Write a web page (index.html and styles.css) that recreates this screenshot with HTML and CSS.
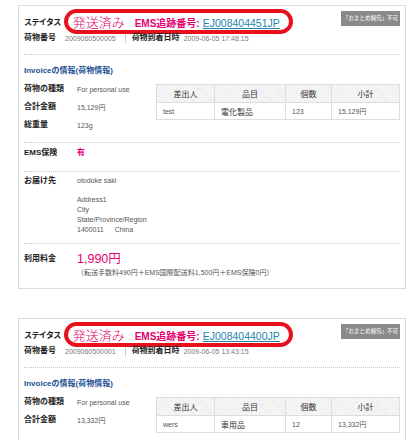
FILE: index.html
```html
<!DOCTYPE html>
<html lang="ja">
<head>
  <meta charset="UTF-8">
  <meta name="viewport" content="width=device-width, initial-scale=1.0">
  <title>荷物一覧</title>
  <link rel="stylesheet" href="styles.css">
</head>
<body>

  <!-- 荷物 1 -->
  <div class="parcel">
    <div class="parcel-head">
      <div class="status-row">
        <span class="label label-status">ステイタス</span>
        <span class="status-mark">
          <span class="status-text">発送済み</span>
          <span class="tracking-label">EMS追跡番号:</span>
          <a href="#" class="tracking-no">EJ008404451JP</a>
        </span>
        <span class="badge">「おまとめ梱包」不可</span>
      </div>
      <div class="meta-row">
        <span class="label">荷物番号</span>
        <span class="meta-value">2009060500005</span>
        <span class="meta-sep"></span>
        <span class="label">荷物到着日時</span>
        <span class="meta-value meta-date">2009-06-05 17:48:15</span>
      </div>
    </div>

    <div class="section invoice">
      <h3 class="section-title">Invoiceの情報(荷物情報)</h3>
      <div class="invoice-body">
        <dl class="fields">
          <div class="field"><dt class="label">荷物の種類</dt><dd>For personal use</dd></div>
          <div class="field"><dt class="label">合計金額</dt><dd>15,129円</dd></div>
          <div class="field"><dt class="label">総重量</dt><dd>123g</dd></div>
        </dl>
        <table class="items">
          <thead>
            <tr><th class="c-from">差出人</th><th class="c-item">品目</th><th class="c-qty">個数</th><th class="c-sub">小計</th></tr>
          </thead>
          <tbody>
            <tr><td>test</td><td class="jp">電化製品</td><td>123</td><td>15,129円</td></tr>
          </tbody>
        </table>
      </div>
    </div>

    <div class="section insurance">
      <div class="field"><span class="label">EMS保険</span><span class="yes">有</span></div>
    </div>

    <div class="section address">
      <div class="field">
        <span class="label">お届け先</span>
        <div class="address-body">
          <div>otodoke saki</div>
          <div class="address-lines">
            <div>Address1</div>
            <div>City</div>
            <div>State/Province/Region</div>
            <div>1400011<span class="country">China</span></div>
          </div>
        </div>
      </div>
    </div>

    <div class="section fee">
      <div class="field">
        <span class="label">利用料金</span>
        <div>
          <div class="fee-total">1,990円</div>
          <div class="fee-note">（転送手数料490円＋EMS国際配送料1,500円＋EMS保険0円）</div>
        </div>
      </div>
    </div>
  </div>

  <!-- 荷物 2 -->
  <div class="parcel">
    <div class="parcel-head">
      <div class="status-row">
        <span class="label label-status">ステイタス</span>
        <span class="status-mark">
          <span class="status-text">発送済み</span>
          <span class="tracking-label">EMS追跡番号:</span>
          <a href="#" class="tracking-no">EJ008404400JP</a>
        </span>
        <span class="badge">「おまとめ梱包」不可</span>
      </div>
      <div class="meta-row">
        <span class="label">荷物番号</span>
        <span class="meta-value">2009060500001</span>
        <span class="meta-sep"></span>
        <span class="label">荷物到着日時</span>
        <span class="meta-value meta-date">2009-06-05 13:43:15</span>
      </div>
    </div>

    <div class="section invoice">
      <h3 class="section-title">Invoiceの情報(荷物情報)</h3>
      <div class="invoice-body">
        <dl class="fields">
          <div class="field"><dt class="label">荷物の種類</dt><dd>For personal use</dd></div>
          <div class="field"><dt class="label">合計金額</dt><dd>13,332円</dd></div>
        </dl>
        <table class="items">
          <thead>
            <tr><th class="c-from">差出人</th><th class="c-item">品目</th><th class="c-qty">個数</th><th class="c-sub">小計</th></tr>
          </thead>
          <tbody>
            <tr><td>wers</td><td class="jp">車用品</td><td>12</td><td>13,332円</td></tr>
          </tbody>
        </table>
      </div>
    </div>
  </div>

</body>
</html>
```

FILE: styles.css
```css
body {
  margin: 0;
  padding: 5px 0 0 18px;
  font-family: "Liberation Sans", "Noto Sans CJK JP", sans-serif;
  color: #222;
  background: #fff;
}

.parcel {
  box-sizing: border-box;
  width: 388px;
  padding: 0 5px;
  border: 1px solid #dcdcdc;
  margin-bottom: 29px;
}

.label {
  font-size: 8px;
  font-weight: bold;
  color: #222;
  line-height: 10px;
}

/* ステイタス + 発送状況 */
.parcel-head {
  padding-bottom: 12px;
  border-bottom: 1px dotted #c8c8c8;
}

.status-row {
  display: flex;
  align-items: center;
  margin-top: 3px;
}

.label-status {
  letter-spacing: -0.6px;
  margin-top: 2px;
}

.status-mark {
  display: flex;
  align-items: baseline;
  box-sizing: border-box;
  height: 25px;
  margin-left: 3px;
  padding: 2px 9px 0 5px;
  border: 4px solid #e8101c;
  border-radius: 13px;
  color: #e4006f;
}

.status-text {
  font-size: 13px;
  line-height: 15px;
  font-weight: 300;
}

.tracking-label {
  margin-left: 10px;
  font-size: 10px;
  font-weight: bold;
}

.tracking-no {
  margin-left: 3px;
  font-size: 10.5px;
  color: #1f84ad;
  text-decoration: underline;
}

.badge {
  align-self: flex-start;
  margin: 2px 0 0 auto;
  padding: 0 2px;
  background: #8a8a8a;
  color: #fff;
  font-size: 5.5px;
  line-height: 15px;
  white-space: nowrap;
}

.meta-row {
  display: flex;
  align-items: center;
  height: 8px;
}

.meta-row .label { line-height: 8px; }

.meta-value {
  margin-left: 9px;
  font-size: 7px;
  color: #777;
}

.meta-date { margin-left: 4px; }

.meta-sep {
  width: 1px;
  height: 9px;
  margin: 0 6px 0 9px;
  background: #ccc;
}

/* セクション共通 */
.section {
  border-bottom: 1px dotted #c8c8c8;
}

.section:last-child { border-bottom: none; }

.field {
  display: flex;
  align-items: flex-start;
}

.field .label,
.field dt {
  flex: 0 0 53px;
}

.field dd,
.address-body {
  margin: 0;
  font-size: 7px;
  color: #555;
}

/* Invoice */
.invoice {
  padding: 11px 0 8px;
}

.section-title {
  margin: 0;
  font-size: 8px;
  line-height: 10px;
  color: #1d4f94;
}

.invoice-body {
  display: flex;
  margin-top: 4px;
}

.fields {
  flex: 1;
  margin: 0;
}

.fields .field {
  height: 18px;
  align-items: center;
}

.items {
  width: 244px;
  margin-top: 4px;
  border-collapse: collapse;
  border: 1px solid #ddd;
  align-self: flex-start;
}

.items th {
  height: 17px;
  padding: 0;
  font-size: 8px;
  font-weight: normal;
  color: #333;
  text-align: center;
  border: 1px solid #ddd;
  background: repeating-linear-gradient(45deg, #f7f7f7 0 2px, #e9e9e9 2px 3px);
}

.items td {
  height: 16px;
  padding: 0 0 0 6px;
  font-size: 7px;
  color: #555;
  border: 1px solid #ddd;
}

.items td.jp { font-size: 8px; color: #333; }

.c-from { width: 57px; }
.c-item { width: 70px; }
.c-qty { width: 45px; }

/* EMS保険 */
.insurance {
  padding: 5px 0 13px;
}

.yes {
  font-size: 8px;
  font-weight: bold;
  line-height: 10px;
  color: #e4006f;
}

/* お届け先 */
.address {
  padding: 4px 0 8px;
}

.address-body { line-height: 10px; }

.address-lines { margin-top: 9px; }

.country { margin-left: 11px; }

/* 利用料金 */
.fee {
  padding: 8px 0 11px;
}

.fee .label { line-height: 14px; }

.fee-total {
  font-size: 12.5px;
  line-height: 14px;
  color: #e4006f;
}

.fee-note {
  margin-top: 3px;
  font-size: 7px;
  line-height: 8px;
  color: #555;
}
```
